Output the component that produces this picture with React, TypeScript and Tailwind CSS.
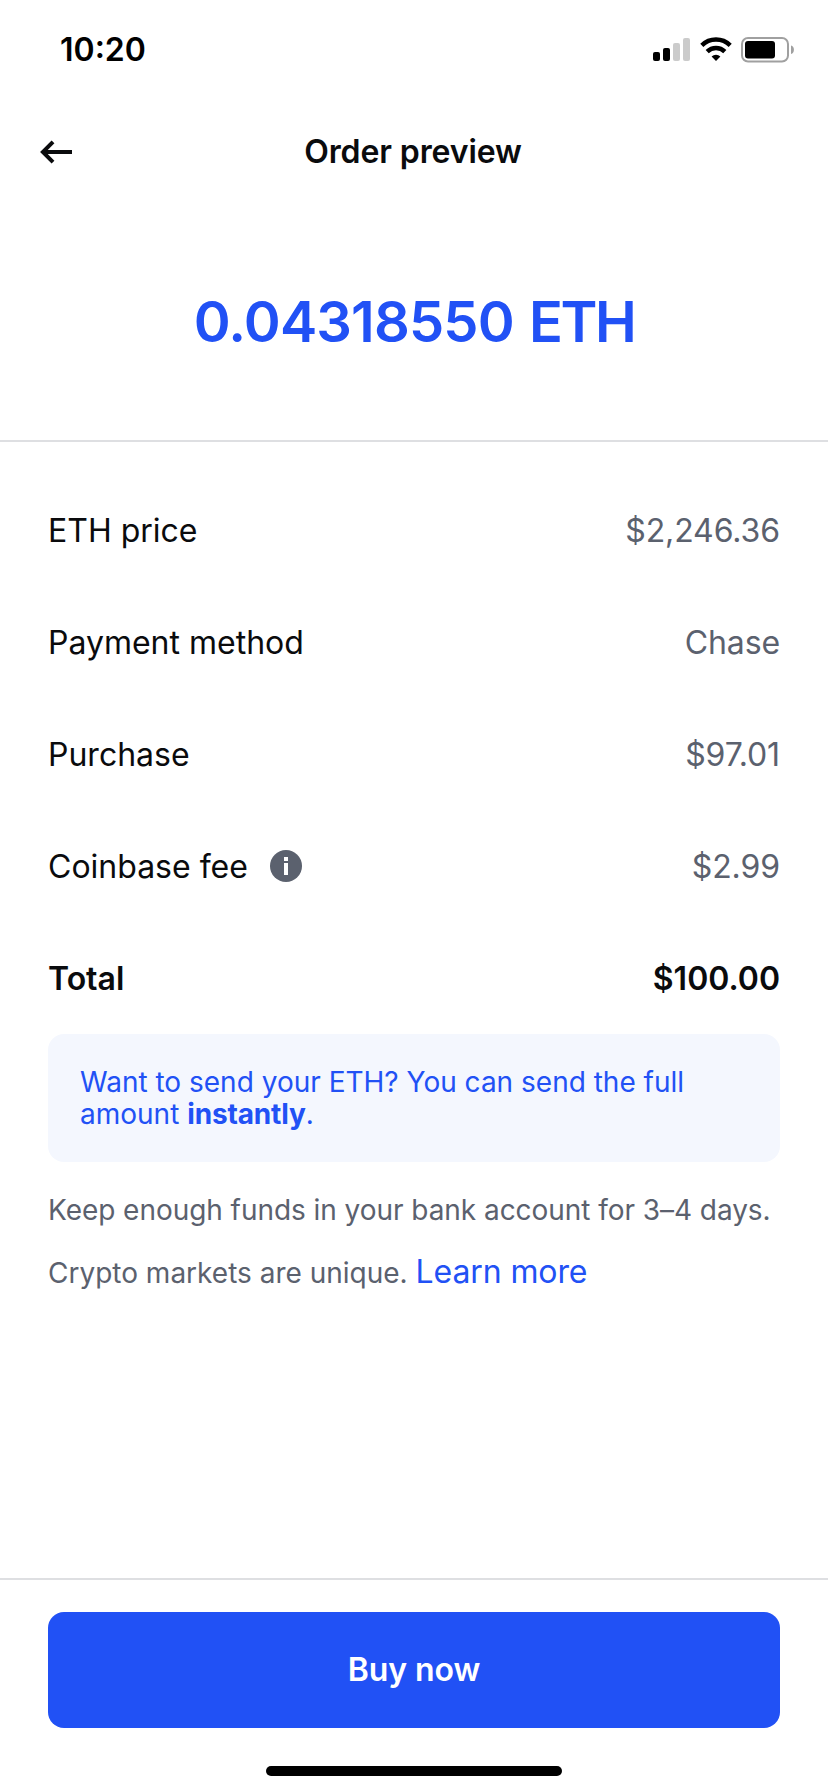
import type { ReactNode } from "react";

type Row = {
  label: string;
  value: string;
  icon?: ReactNode;
  bold?: boolean;
};

function SignalIcon() {
  return (
    <svg width="38" height="24" viewBox="0 0 38 24">
      <rect x="0" y="14" width="7" height="9" rx="2" fill="#000" />
      <rect x="10" y="10" width="7" height="13" rx="2" fill="#000" />
      <rect x="20" y="5" width="7" height="18" rx="2" fill="#cbcbcb" />
      <rect x="30" y="0" width="7" height="23" rx="2" fill="#cbcbcb" />
    </svg>
  );
}

function WifiIcon() {
  return (
    <svg width="32" height="26" viewBox="0 0 32 26" fill="none" stroke="#000" strokeWidth="4.4">
      <path d="M1.8 8.4A20.2 20.2 0 0 1 30.2 8.4" />
      <path d="M7.2 14.6A12.4 12.4 0 0 1 24.8 14.6" />
      <path d="M16 24L11.6 19.6A6.2 6.2 0 0 1 20.4 19.6Z" fill="#000" stroke="none" />
    </svg>
  );
}

function BatteryIcon() {
  return (
    <svg width="54" height="26" viewBox="0 0 54 26">
      <rect x="1" y="1" width="46" height="23.5" rx="6" fill="none" stroke="#a0a0a0" strokeWidth="2" />
      <rect x="4" y="4" width="30" height="17.5" rx="3" fill="#000" />
      <path d="M50 8.5C53.9 9.5 53.9 16 50 17Z" fill="#a0a0a0" />
    </svg>
  );
}

function BackIcon() {
  return (
    <svg width="32" height="24" viewBox="0 0 32 24" fill="none" stroke="#0a0b0d" strokeWidth="4">
      <path d="M32 12H3" />
      <path d="M13 1.9L2.9 12L13 22.1" />
    </svg>
  );
}

function InfoIcon() {
  return (
    <svg width="32" height="32" viewBox="0 0 32 32">
      <circle cx="16" cy="16" r="16" fill="#5b616e" />
      <rect x="14" y="7" width="4" height="4" fill="#fff" />
      <rect x="14" y="13" width="4" height="12" fill="#fff" />
    </svg>
  );
}

const rows: Row[] = [
  { label: "ETH price", value: "$2,246.36" },
  { label: "Payment method", value: "Chase" },
  { label: "Purchase", value: "$97.01" },
  { label: "Coinbase fee", value: "$2.99", icon: <InfoIcon /> },
  { label: "Total", value: "$100.00", bold: true },
];

function StatusBar() {
  return (
    <div className="flex h-[100px] items-center justify-between pl-[60px] pr-[33px] text-black">
      <span className="text-[32px] font-semibold">10:20</span>
      <div className="flex items-center gap-[9px]">
        <SignalIcon />
        <WifiIcon />
        <BatteryIcon />
      </div>
    </div>
  );
}

function SummaryRow({ label, value, icon, bold }: Row) {
  return (
    <div className="flex h-28 items-center justify-between text-[32px]">
      <div className="flex items-center gap-[22px]">
        <span className={bold ? "pt-px font-semibold" : "pt-px"}>{label}</span>
        {icon}
      </div>
      <span className={bold ? "pt-px font-semibold" : "pt-px tracking-[-0.1px] text-[#5b616e]"}>
        {value}
      </span>
    </div>
  );
}

export default function App() {
  return (
    <div className="flex h-[1792px] w-[828px] flex-col bg-white font-['Inter',sans-serif] text-[#0a0b0d]">
      <StatusBar />

      <header className="grid h-[104px] grid-cols-[1fr_auto_1fr] items-center pl-10 pr-[42px]">
        <button aria-label="Back" className="justify-self-start">
          <BackIcon />
        </button>
        <h1 className="text-[32px] font-semibold tracking-[-0.1px]">Order preview</h1>
      </header>

      <div className="flex h-[238px] items-center justify-center border-b-2 border-[#dedfe2]">
        <p className="text-[56px] font-semibold tracking-[-0.85px] text-[#2151f5] [word-spacing:2px]">
          0.04318550 <span className="tracking-[-2.5px]">ETH</span>
        </p>
      </div>

      <main className="flex-1 px-12 pt-8">
        {rows.map((row) => (
          <SummaryRow key={row.label} {...row} />
        ))}

        <div className="rounded-2xl bg-[#f4f7fe] p-8 text-[28px] leading-8 text-[#2151f5]">
          Want to send your ETH? You can send the full
          <br />
          amount <span className="font-bold tracking-[-0.15px]">instantly</span>.
        </div>

        <p className="mt-8 text-[28px] leading-8 tracking-[-0.05px] text-[#5b616e]">
          Keep enough funds in your bank account for 3–4 days.
        </p>
        <p className="mt-[26px] text-[28px] leading-10 text-[#5b616e]">
          Crypto markets are unique.{" "}
          <a className="text-[32px] tracking-[-0.1px] text-[#2151f5]">Learn more</a>
        </p>
      </main>

      <footer className="flex h-[214px] flex-col items-center border-t-2 border-[#dedfe2] px-12 pt-8">
        <button className="h-[116px] w-full rounded-2xl bg-[#2151f5] text-[32px] font-semibold tracking-[-0.1px] text-white">
          Buy now
        </button>
        <div className="mt-[38px] h-2.5 w-[296px] rounded-full bg-black" />
      </footer>
    </div>
  );
}
